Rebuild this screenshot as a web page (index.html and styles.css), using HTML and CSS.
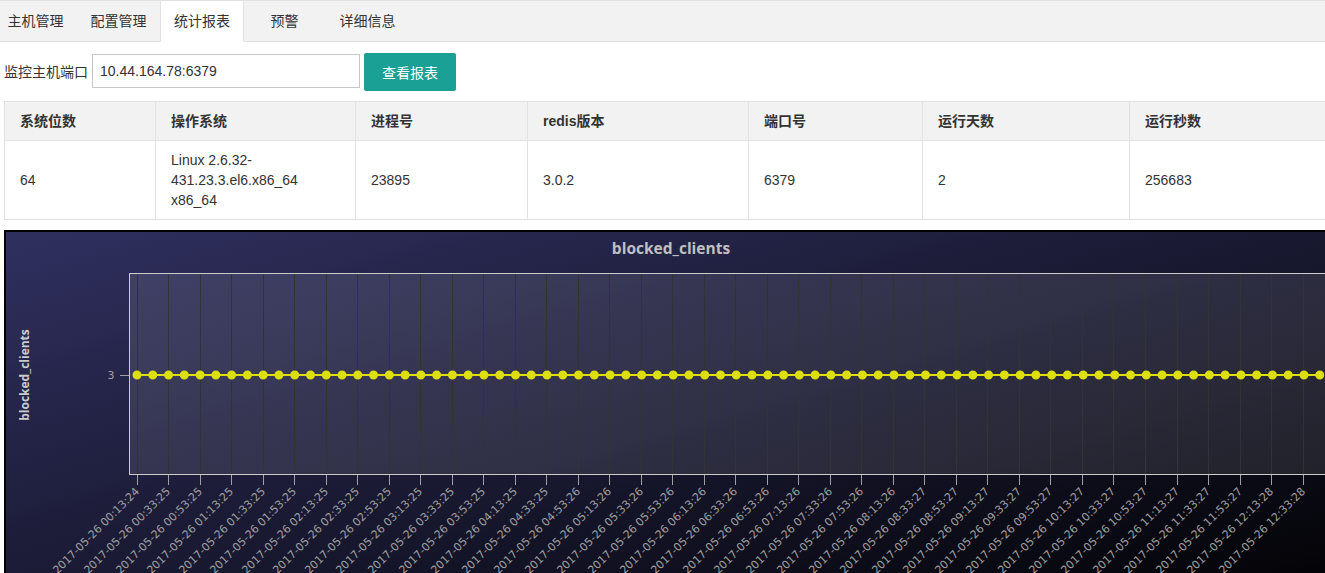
FILE: index.html
```html
<!DOCTYPE html>
<html lang="zh-CN">
<head>
<meta charset="utf-8">
<title>统计报表</title>
<link rel="stylesheet" href="styles.css">
</head>
<body>
<div class="tabs">
  <ul class="tab-list">
    <li>主机管理</li>
    <li>配置管理</li>
    <li class="active">统计报表</li>
    <li>预警</li>
    <li>详细信息</li>
  </ul>
</div>

<div class="query">
  <label class="query-label">监控主机端口</label>
  <input class="query-input" type="text" value="10.44.164.78:6379">
  <button class="query-btn" type="button">查看报表</button>
</div>

<table class="info">
  <colgroup>
    <col class="w1"><col class="w2"><col class="w3"><col class="w4"><col class="w5"><col class="w6"><col class="w7">
  </colgroup>
  <thead>
    <tr><th>系统位数</th><th>操作系统</th><th>进程号</th><th>redis版本</th><th>端口号</th><th>运行天数</th><th>运行秒数</th></tr>
  </thead>
  <tbody>
    <tr><td>64</td><td>Linux 2.6.32-431.23.3.el6.x86_64 x86_64</td><td>23895</td><td>3.0.2</td><td>6379</td><td>2</td><td>256683</td></tr>
  </tbody>
</table>

<div class="chart">
<svg class="chart-svg" width="1334" height="400" viewBox="0 0 1334 400" xmlns="http://www.w3.org/2000/svg">
  <defs>
    <linearGradient id="chartBg" x1="0" y1="0" x2="1" y2="1">
      <stop offset="0" stop-color="rgb(48,48,96)"/>
      <stop offset="1" stop-color="rgb(0,0,0)"/>
    </linearGradient>
  </defs>
  <rect x="1" y="1" width="1332" height="398" fill="url(#chartBg)" stroke="#000" stroke-width="2"/>
  <text class="c-title" x="667" y="24">blocked_clients</text>
  <rect class="plot-bg" x="125.5" y="43.5" width="1199" height="201"/>
  <path class="grid" d="M133.5 44V244M164.5 44V244M196.5 44V244M227.5 44V244M259.5 44V244M290.5 44V244M322.5 44V244M353.5 44V244M385.5 44V244M416.5 44V244M448.5 44V244M479.5 44V244M511.5 44V244M542.5 44V244M574.5 44V244M605.5 44V244M637.5 44V244M668.5 44V244M700.5 44V244M731.5 44V244M763.5 44V244M794.5 44V244M826.5 44V244M857.5 44V244M889.5 44V244M920.5 44V244M952.5 44V244M983.5 44V244M1015.5 44V244M1046.5 44V244M1078.5 44V244M1109.5 44V244M1141.5 44V244M1173.5 44V244M1204.5 44V244M1236.5 44V244M1267.5 44V244M1299.5 44V244"/>
  <rect class="plot-border" x="125.5" y="43.5" width="1199" height="201"/>
  <path class="ticks" d="M133.5 245V255M164.5 245V255M196.5 245V255M227.5 245V255M259.5 245V255M290.5 245V255M322.5 245V255M353.5 245V255M385.5 245V255M416.5 245V255M448.5 245V255M479.5 245V255M511.5 245V255M542.5 245V255M574.5 245V255M605.5 245V255M637.5 245V255M668.5 245V255M700.5 245V255M731.5 245V255M763.5 245V255M794.5 245V255M826.5 245V255M857.5 245V255M889.5 245V255M920.5 245V255M952.5 245V255M983.5 245V255M1015.5 245V255M1046.5 245V255M1078.5 245V255M1109.5 245V255M1141.5 245V255M1173.5 245V255M1204.5 245V255M1236.5 245V255M1267.5 245V255M1299.5 245V255"/>
  <path class="ticks" d="M116 145.5H125"/>
  <text class="y-label" x="110.5" y="149">3</text>
  <text class="y-title" transform="translate(25 145) rotate(-90)">blocked_clients</text>
  <line class="series-line" x1="133" y1="145" x2="1315.75" y2="145"/>
  <line class="series-dots" x1="133" y1="145" x2="1316" y2="145"/>
  <g class="xlabels">
    <text transform="translate(136 262) rotate(-45)">2017-05-26 00:13:24</text>
    <text transform="translate(167 262) rotate(-45)">2017-05-26 00:33:25</text>
    <text transform="translate(199 262) rotate(-45)">2017-05-26 00:53:25</text>
    <text transform="translate(230 262) rotate(-45)">2017-05-26 01:13:25</text>
    <text transform="translate(262 262) rotate(-45)">2017-05-26 01:33:25</text>
    <text transform="translate(293 262) rotate(-45)">2017-05-26 01:53:25</text>
    <text transform="translate(325 262) rotate(-45)">2017-05-26 02:13:25</text>
    <text transform="translate(356 262) rotate(-45)">2017-05-26 02:33:25</text>
    <text transform="translate(388 262) rotate(-45)">2017-05-26 02:53:25</text>
    <text transform="translate(419 262) rotate(-45)">2017-05-26 03:13:25</text>
    <text transform="translate(451 262) rotate(-45)">2017-05-26 03:33:25</text>
    <text transform="translate(482 262) rotate(-45)">2017-05-26 03:53:25</text>
    <text transform="translate(514 262) rotate(-45)">2017-05-26 04:13:25</text>
    <text transform="translate(545 262) rotate(-45)">2017-05-26 04:33:25</text>
    <text transform="translate(577 262) rotate(-45)">2017-05-26 04:53:26</text>
    <text transform="translate(608 262) rotate(-45)">2017-05-26 05:13:26</text>
    <text transform="translate(640 262) rotate(-45)">2017-05-26 05:33:26</text>
    <text transform="translate(671 262) rotate(-45)">2017-05-26 05:53:26</text>
    <text transform="translate(703 262) rotate(-45)">2017-05-26 06:13:26</text>
    <text transform="translate(734 262) rotate(-45)">2017-05-26 06:33:26</text>
    <text transform="translate(766 262) rotate(-45)">2017-05-26 06:53:26</text>
    <text transform="translate(797 262) rotate(-45)">2017-05-26 07:13:26</text>
    <text transform="translate(829 262) rotate(-45)">2017-05-26 07:33:26</text>
    <text transform="translate(860 262) rotate(-45)">2017-05-26 07:53:26</text>
    <text transform="translate(892 262) rotate(-45)">2017-05-26 08:13:26</text>
    <text transform="translate(923 262) rotate(-45)">2017-05-26 08:33:27</text>
    <text transform="translate(955 262) rotate(-45)">2017-05-26 08:53:27</text>
    <text transform="translate(986 262) rotate(-45)">2017-05-26 09:13:27</text>
    <text transform="translate(1018 262) rotate(-45)">2017-05-26 09:33:27</text>
    <text transform="translate(1049 262) rotate(-45)">2017-05-26 09:53:27</text>
    <text transform="translate(1081 262) rotate(-45)">2017-05-26 10:13:27</text>
    <text transform="translate(1112 262) rotate(-45)">2017-05-26 10:33:27</text>
    <text transform="translate(1144 262) rotate(-45)">2017-05-26 10:53:27</text>
    <text transform="translate(1176 262) rotate(-45)">2017-05-26 11:13:27</text>
    <text transform="translate(1207 262) rotate(-45)">2017-05-26 11:33:27</text>
    <text transform="translate(1239 262) rotate(-45)">2017-05-26 11:53:27</text>
    <text transform="translate(1270 262) rotate(-45)">2017-05-26 12:13:28</text>
    <text transform="translate(1302 262) rotate(-45)">2017-05-26 12:33:28</text>
  </g>
</svg>
</div>
</body>
</html>
```

FILE: styles.css
```css
html {
  overflow: hidden;
}

body {
  margin: 0;
  font-family: "Liberation Sans", Arial, "Noto Sans CJK SC", sans-serif;
  font-size: 14px;
  line-height: 20px;
  color: #333;
  background: #fff;
}

/* ---------- tabs ---------- */
.tabs {
  height: 40px;
  border-top: 1px solid #e2e2e2;
  border-bottom: 1px solid #e2e2e2;
  background: #f2f2f2;
}

.tab-list {
  display: flex;
  margin: 0 0 0 -6px;
  padding: 0;
  list-style: none;
  height: 40px;
}

.tab-list li {
  box-sizing: border-box;
  min-width: 83px;
  padding: 0 13px;
  line-height: 40px;
  text-align: center;
  font-size: 14px;
  color: #333;
  white-space: nowrap;
}

.tab-list li.active {
  min-width: 84px;
  height: 41px;
  margin-right: -1px;
  background: #fff;
  border-left: 1px solid #e2e2e2;
  border-right: 1px solid #e2e2e2;
}

/* ---------- query row ---------- */
.query {
  display: flex;
  align-items: flex-start;
  height: 38px;
  margin-top: 11px;
  padding-left: 4px;
}

.query-label {
  line-height: 38px;
  margin-right: 4px;
  font-size: 14px;
}

.query-input {
  box-sizing: border-box;
  width: 268px;
  height: 34px;
  margin: 1px 0 0 0;
  padding: 0 7px;
  border: 1px solid #c9c9c9;
  border-radius: 0;
  font-family: "Liberation Sans", Arial, sans-serif;
  font-size: 14px;
  color: #333;
  outline: none;
}

.query-btn {
  box-sizing: border-box;
  width: 92px;
  height: 38px;
  margin-left: 4px;
  border: 0;
  border-radius: 2px;
  background: #1aa094;
  color: #fff;
  font-family: "Liberation Sans", Arial, "Noto Sans CJK SC", sans-serif;
  font-size: 14px;
  padding: 0;
}

/* ---------- info table ---------- */
.info {
  margin: 10px 0 0 4px;
  width: 1334px;
  border-collapse: collapse;
  table-layout: fixed;
}

.w1 { width: 151px; }
.w2 { width: 200px; }
.w3 { width: 172px; }
.w4 { width: 221px; }
.w5 { width: 174px; }
.w6 { width: 207px; }
.w7 { width: 209px; }

.info th,
.info td {
  border: 1px solid #e2e2e2;
  padding: 9px 15px;
  text-align: left;
  line-height: 20px;
  font-size: 14px;
  vertical-align: middle;
  color: #333;
}

.info th {
  background: #f2f2f2;
  font-weight: bold;
}

/* ---------- chart ---------- */
.chart {
  width: 1334px;
  height: 400px;
  margin: 10px 0 0 4px;
}

.chart-svg {
  display: block;
}

.c-title {
  font-family: "Open Sans", "DejaVu Sans", sans-serif;
  font-weight: bold;
  font-size: 15.5px;
  fill: #c0c0c0;
  text-anchor: middle;
}

.plot-bg {
  fill: rgba(255, 255, 255, 0.1);
}

.plot-border {
  fill: none;
  stroke: #cccccc;
  stroke-width: 1;
  shape-rendering: crispEdges;
}

.grid {
  stroke: #333333;
  stroke-width: 1;
  fill: none;
  shape-rendering: crispEdges;
}

.ticks {
  stroke: #a0a0a0;
  stroke-width: 1;
  fill: none;
  shape-rendering: crispEdges;
}

.y-label {
  font-family: "DejaVu Sans", sans-serif;
  font-size: 11px;
  fill: #a0a0a0;
  text-anchor: end;
}

.y-title {
  font-family: "Open Sans", "DejaVu Sans", sans-serif;
  font-weight: bold;
  font-size: 12px;
  fill: #cccccc;
  text-anchor: middle;
}

.series-line {
  stroke: #dddf0d;
  stroke-width: 2;
}

.series-dots {
  stroke: #dddf0d;
  stroke-width: 9;
  stroke-linecap: round;
  stroke-dasharray: 0 15.77;
}

.xlabels text {
  font-family: "DejaVu Sans", sans-serif;
  font-size: 11px;
  fill: #a0a0a0;
  text-anchor: end;
}
```
